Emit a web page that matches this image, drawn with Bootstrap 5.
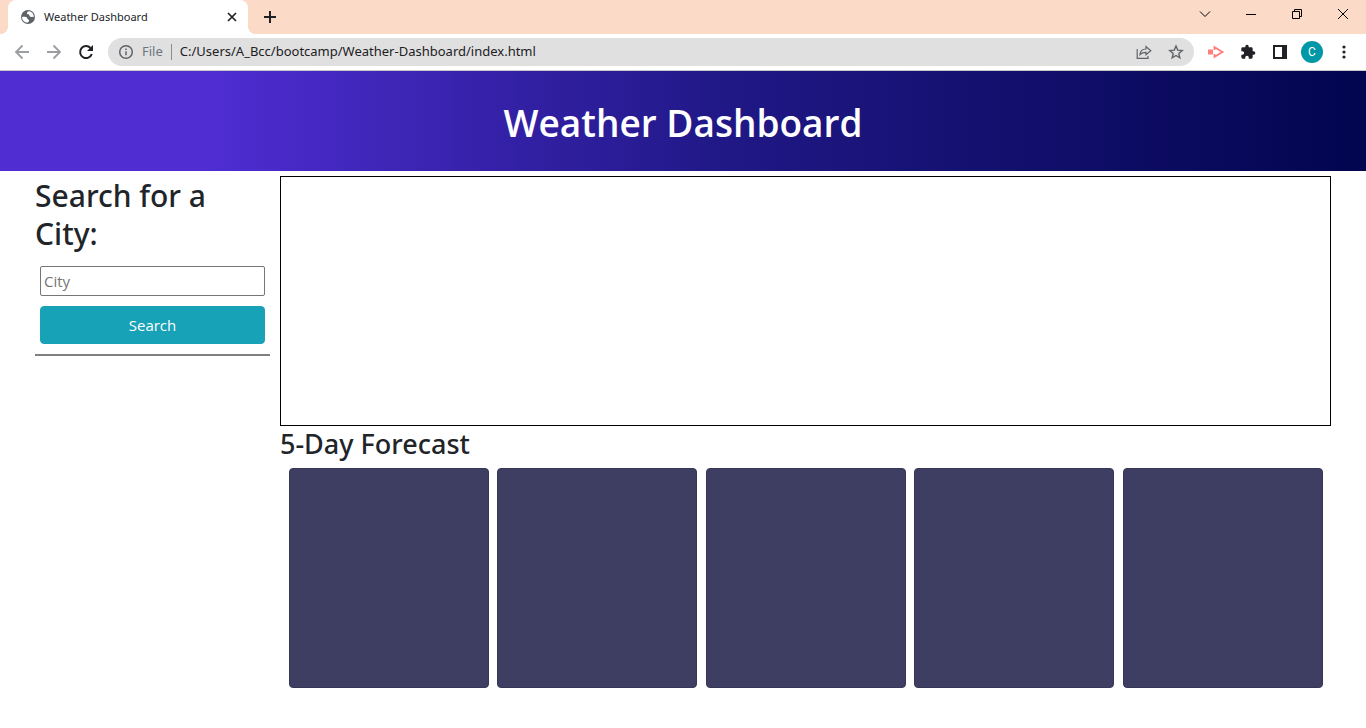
<!DOCTYPE html>
<html lang="en">
<head>
<meta charset="utf-8">
<meta name="viewport" content="width=device-width, initial-scale=1">
<title>Weather Dashboard</title>
<link href="https://cdn.jsdelivr.net/npm/bootstrap@5.3.0/dist/css/bootstrap.min.css" rel="stylesheet">
<style>
  body { font-family: "Open Sans", "Noto Sans", sans-serif; color: #212529; }
  svg { display: block; flex: none; }

  /* Browser window */
  .tab-strip { background: #fcdac8; height: 34px; padding-left: 8px; }
  .tab-active { position: relative; background: #fff; width: 240px; height: 34px; padding: 0 10px 0 12px; border-radius: 8px 8px 0 0; }
  .tab-active::before, .tab-active::after { content: ""; position: absolute; bottom: 0; width: 8px; height: 8px; }
  .tab-active::before { right: 100%; background: radial-gradient(circle at 0 0, #fcdac8 8px, #fff 8px); }
  .tab-active::after { left: 100%; background: radial-gradient(circle at 100% 0, #fcdac8 8px, #fff 8px); }
  .tab-title { font-family: "Noto Sans", sans-serif; font-size: 11px; }
  .bare { background: none; border: 0; padding: 0; color: #1f2124; display: flex; align-items: center; justify-content: center; }
  .win-btn { width: 46px; height: 28px; }
  .toolbar { height: 37px; background: #fff; border-bottom: 1px solid #c8c8c8; padding: 0 6px; }
  .tool-btn { width: 32px; height: 32px; }
  .address { font-family: "Noto Sans", sans-serif; background: #e0e0e0; height: 28px; border-radius: 14px; padding: 0 2px 0 10px; font-size: 13px; margin: 0 6px; }
  .address-rule { width: 1px; height: 16px; background: #8a8d91; margin: 0 8px; }
  .address-field { background: none; border: 0; padding: 0; color: #202124; outline: 0; min-width: 0; }
  .avatar { width: 22px; height: 22px; background: #0097a7; color: #fff; border-radius: 50%; font: 12px/22px Roboto, sans-serif; }

  /* Page */
  h2, h3 { font-family: "Noto Sans", "Open Sans", sans-serif; }
  .hero { height: 100px; padding-top: 4px; background: linear-gradient(90deg, #4f2dd3 15%, #201886 53%, #02054f 100%); color: #fff; }
  .hero h1 { font-size: 37px; font-weight: 600; }
  .page { padding: 5px 35px; gap: 10px; }
  .search-panel { flex: 0 0 235px; }
  .search-panel h2 { font-size: 30px; line-height: 38px; padding-top: 1px; margin: 0 0 13px; }
  .search-form { gap: 10px; padding: 0 5px; }
  .city-field { height: 30px; border: 1px solid #767676; border-radius: 2px; padding: 1px 3px; font-size: 15px; }
  .city-field::placeholder { color: #757575; }
  .btn-search { --bs-btn-bg: #17a2b8; --bs-btn-color: #fff; --bs-btn-border-color: #17a2b8; --bs-btn-hover-bg: #138496; --bs-btn-hover-color: #fff; --bs-btn-border-radius: 4px; height: 38px; font-size: 15px; }
  .search-rule { border-top: 2px solid #808080; opacity: 1; margin: 10px 0; }
  .current { height: 250px; border: 1px solid #000; }
  .forecast-title { font-size: 27px; line-height: 34px; margin: 1px 0 7px; }
  .day { width: 200px; height: 220px; background: #3e3e62; border: 1px solid #363656; border-radius: 4px; }
</style>
</head>
<body>
<div class="tab-strip d-flex">
  <div class="tab-active d-flex align-items-center">
    <svg width="16" height="16" viewBox="0 0 16 16"><circle cx="8" cy="8" r="7" fill="#5f6368"/><path d="M2 8c2.400-.3 4.400-.1 5.200 1 .6 1 .2 1.600 1.400 1.700.9.1.5 1.300-.5 2.900C4.500 13.700 2 11.500 2 8zM8.800 2.300c-1.600.7-2.300 1.500-1.700 2.500.8.8 1.900.2 2.200 1.300.3 1.200 1 2.300 2.200 1.800.8-.4 1.300-.3 2.300.3.300-3.200-2-5.600-5-5.900z" fill="#fff"/></svg>
    <span class="tab-title flex-grow-1 ps-2">Weather Dashboard</span>
    <button class="bare" type="button" aria-label="Close tab"><svg width="12" height="12" viewBox="0 0 12 12" stroke="currentColor" stroke-width="1.700"><path d="M2 2l8 8M10 2l-8 8"/></svg></button>
  </div>
  <button class="bare ms-3" type="button" aria-label="New tab"><svg width="12" height="12" viewBox="0 0 12 12" stroke="currentColor" stroke-width="2"><path d="M6 0v12M0 6h12"/></svg></button>
  <div class="d-flex ms-auto">
    <button class="bare win-btn" type="button" aria-label="Search tabs"><svg width="12" height="12" viewBox="0 0 12 12" fill="none" stroke="#000"><path d="M1 3.500l5 5 5-5"/></svg></button>
    <button class="bare win-btn" type="button" aria-label="Minimize"><svg width="10" height="10" viewBox="0 0 10 10" stroke="#000"><path d="M0 5.500h10"/></svg></button>
    <button class="bare win-btn" type="button" aria-label="Restore"><svg width="10" height="10" viewBox="0 0 10 10" fill="none" stroke="#000"><path d="M.5 2.500h7v7h-7zM2.500 2.500v-2h7v7h-2"/></svg></button>
    <button class="bare win-btn" type="button" aria-label="Close"><svg width="10" height="10" viewBox="0 0 10 10" stroke="#000"><path d="M0 0l10 10M10 0L0 10"/></svg></button>
  </div>
</div>
<div class="toolbar d-flex align-items-center">
  <button class="bare tool-btn" type="button" aria-label="Back"><svg width="16" height="16" viewBox="0 0 16 16" fill="none" stroke="#9c9da0" stroke-width="1.800"><path d="M15 8H2M8.500 1.500L2 8l6.500 6.500"/></svg></button>
  <button class="bare tool-btn" type="button" aria-label="Forward"><svg width="16" height="16" viewBox="0 0 16 16" fill="none" stroke="#9c9da0" stroke-width="1.800"><path d="M1 8h13M7.500 1.500L14 8l-6.500 6.500"/></svg></button>
  <button class="bare tool-btn" type="button" aria-label="Reload"><svg width="16" height="16" viewBox="0 0 16 16" fill="none" stroke="currentColor" stroke-width="2"><path d="M13.800 10A6 6 0 1 1 12.500 4"/><path d="M15 1v6H9z" fill="currentColor" stroke="none"/></svg></button>
  <div class="address d-flex align-items-center flex-grow-1">
    <svg width="16" height="16" viewBox="0 0 16 16" fill="none" stroke="#5f6368" stroke-width="1.500"><circle cx="8" cy="8" r="6.300"/><path d="M8 7.200v4M8 4.500V6"/></svg>
    <span class="text-secondary ps-2">File</span>
    <span class="address-rule"></span>
    <input class="address-field flex-grow-1" type="text" aria-label="Address" value="C:/Users/A_Bcc/bootcamp/Weather-Dashboard/index.html">
    <button class="bare tool-btn" type="button" aria-label="Share"><svg width="16" height="16" viewBox="0 0 16 16" fill="none" stroke="#5f6368" stroke-width="1.200"><path d="M1.200 5v9.400h10.800V12M4 10.500c.3-3.500 2.500-5.500 6-5.500V2.500l4.800 4.200-4.800 4.100V8.300c-2.800 0-4.600.7-6 2.200z"/></svg></button>
    <button class="bare tool-btn" type="button" aria-label="Bookmark this page"><svg width="16" height="16" viewBox="0 0 16 16" fill="none" stroke="#5f6368" stroke-width="1.400"><path d="M8 2l1.700 4.100 4.500.4-3.400 2.900 1 4.400L8 11.500l-3.800 2.300 1-4.400L1.800 6.500l4.500-.4z"/></svg></button>
  </div>
  <button class="bare tool-btn" type="button" aria-label="Screen recorder"><svg width="18" height="16" viewBox="0 0 18 16" fill="none" stroke="#ff7f7f" stroke-width="1.800"><path d="M1 5.500h5v5H1z" fill="#ff7f7f" stroke="none"/><path d="M7.500 6V3.200L15.500 8l-8 4.800V10"/></svg></button>
  <button class="bare tool-btn" type="button" aria-label="Extensions"><svg width="16" height="16" viewBox="0 0 24 24" fill="currentColor"><path d="M20.500 11H19V7a2 2 0 0 0-2-2h-4V3.500a2.500 2.500 0 0 0-5 0V5H4a2 2 0 0 0-2 2v3.800h1.500a2.700 2.700 0 0 1 0 5.400H2V20a2 2 0 0 0 2 2h3.800v-1.500a2.700 2.700 0 0 1 5.400 0V22H17a2 2 0 0 0 2-2v-4h1.500a2.500 2.500 0 0 0 0-5z"/></svg></button>
  <button class="bare tool-btn" type="button" aria-label="Side panel"><svg width="14" height="14" viewBox="0 0 14 14"><path d="M1 1h12v12H1z" fill="none" stroke="currentColor" stroke-width="2"/><path d="M9 1h4v12H9z" fill="currentColor"/></svg></button>
  <button class="bare tool-btn" type="button" aria-label="Profile"><span class="avatar">C</span></button>
  <button class="bare tool-btn" type="button" aria-label="Menu"><svg width="4" height="14" viewBox="0 0 4 14" fill="currentColor"><circle cx="2" cy="2" r="1.600"/><circle cx="2" cy="7" r="1.600"/><circle cx="2" cy="12" r="1.600"/></svg></button>
</div>

<header class="hero d-flex align-items-center justify-content-center">
  <h1 class="mb-0">Weather Dashboard</h1>
</header>
<div class="page d-flex">
  <aside class="search-panel">
    <form>
      <h2><label for="city">Search for a City:</label></h2>
      <div class="search-form d-grid">
        <input class="city-field" id="city" type="text" placeholder="City">
        <button class="btn btn-search" type="button">Search</button>
      </div>
    </form>
    <hr class="search-rule">
  </aside>
  <main class="flex-grow-1">
    <section class="current" aria-label="Current weather"></section>
    <h3 class="forecast-title">5-Day Forecast</h3>
    <div class="d-flex flex-wrap justify-content-evenly">
      <div class="day"></div>
      <div class="day"></div>
      <div class="day"></div>
      <div class="day"></div>
      <div class="day"></div>
    </div>
  </main>
</div>
<script src="https://cdn.jsdelivr.net/npm/bootstrap@5.3.0/dist/js/bootstrap.bundle.min.js"></script>
</body>
</html>
